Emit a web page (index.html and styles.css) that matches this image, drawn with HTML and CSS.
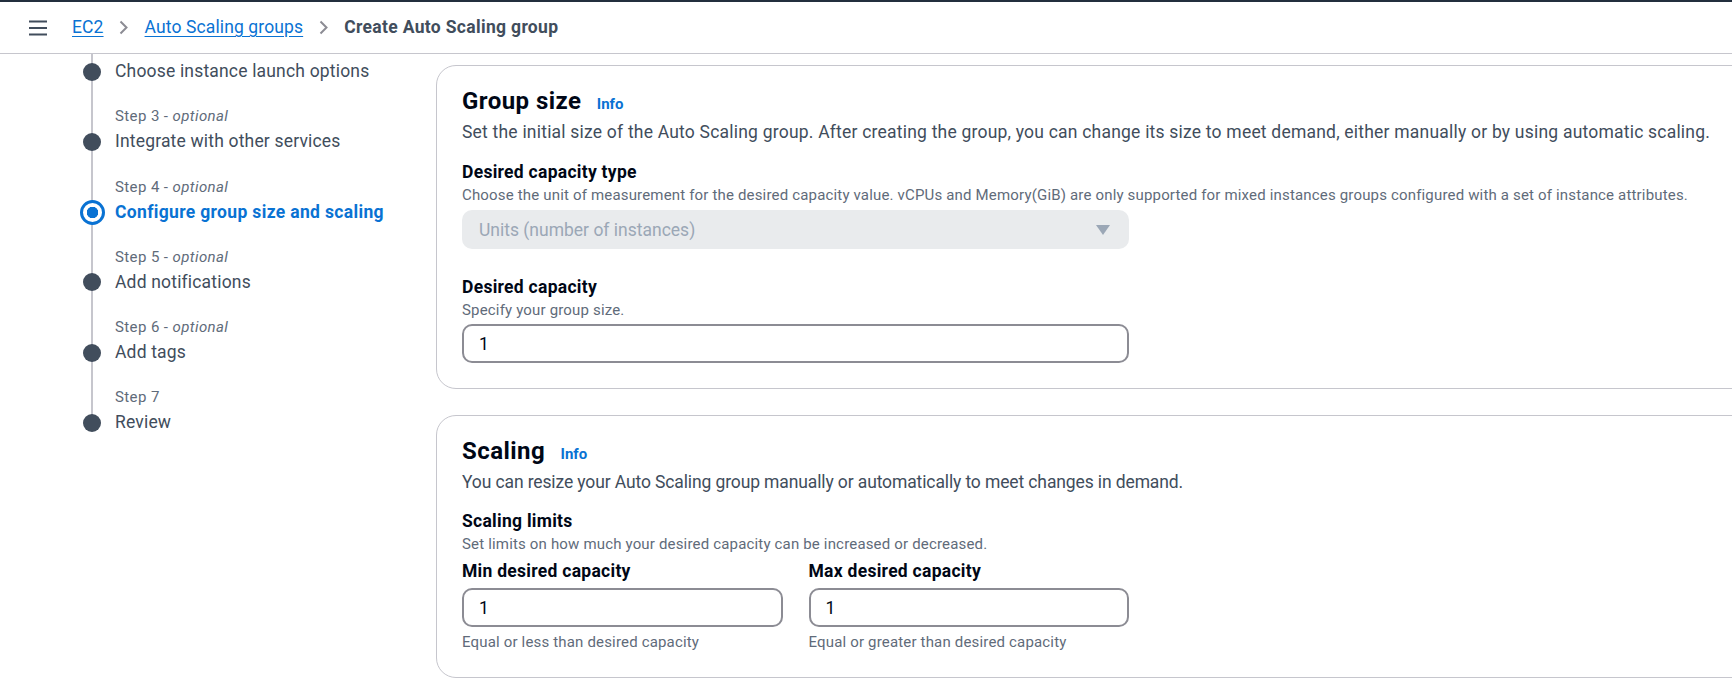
FILE: index.html
```html
<!DOCTYPE html>
<html lang="en">
<head>
<meta charset="utf-8">
<title>Create Auto Scaling group</title>
<link rel="stylesheet" href="styles.css">
</head>
<body>
<header class="topbar">
  <button class="menu" aria-label="Open navigation">
    <svg width="18" height="16" viewBox="0 0 18 16"><path d="M0 1.5h18M0 8h18M0 14.5h18" stroke="#414d5c" stroke-width="2.2" fill="none"/></svg>
  </button>
  <nav class="crumbs">
    <a class="crumb-link" href="#">EC2</a>
    <span class="sep"><svg width="10" height="15" viewBox="0 0 10 15"><path d="M1.5 1.5l6 6-6 6" stroke="#8c8c94" stroke-width="2" fill="none"/></svg></span>
    <a class="crumb-link" href="#">Auto Scaling groups</a>
    <span class="sep"><svg width="10" height="15" viewBox="0 0 10 15"><path d="M1.5 1.5l6 6-6 6" stroke="#8c8c94" stroke-width="2" fill="none"/></svg></span>
    <span class="crumb-current">Create Auto Scaling group</span>
  </nav>
</header>
<div class="layout">
  <aside class="steps">
    <ol class="step-list">
      <li class="step step-first">
        <span class="dot"></span>
        <span class="step-title">Choose instance launch options</span>
      </li>
      <li class="step">
        <span class="step-label">Step 3 - <i>optional</i></span>
        <span class="dot"></span>
        <span class="step-title">Integrate with other services</span>
      </li>
      <li class="step">
        <span class="step-label">Step 4 - <i>optional</i></span>
        <span class="dot dot-active"></span>
        <span class="step-title step-title-active">Configure group size and scaling</span>
      </li>
      <li class="step">
        <span class="step-label">Step 5 - <i>optional</i></span>
        <span class="dot"></span>
        <span class="step-title">Add notifications</span>
      </li>
      <li class="step">
        <span class="step-label">Step 6 - <i>optional</i></span>
        <span class="dot"></span>
        <span class="step-title">Add tags</span>
      </li>
      <li class="step step-last">
        <span class="step-label">Step 7</span>
        <span class="dot"></span>
        <span class="step-title">Review</span>
      </li>
    </ol>
  </aside>
  <main class="content">
    <section class="card">
      <h2 class="card-title">Group size <a class="info" href="#">Info</a></h2>
      <p class="card-desc">Set the initial size of the Auto Scaling group. After creating the group, you can change its size to meet demand, either manually or by using automatic scaling.</p>
      <div class="field">
        <div class="field-label">Desired capacity type</div>
        <div class="field-help">Choose the unit of measurement for the desired capacity value. vCPUs and Memory(GiB) are only supported for mixed instances groups configured with a set of instance attributes.</div>
        <div class="select">
          <span>Units (number of instances)</span>
          <svg width="14" height="10" viewBox="0 0 14 10"><path d="M0 0h14L7 10z" fill="#9ba7b6"/></svg>
        </div>
      </div>
      <div class="field field-spaced">
        <div class="field-label">Desired capacity</div>
        <div class="field-help">Specify your group size.</div>
        <div class="input">1</div>
      </div>
    </section>
    <section class="card card-second">
      <h2 class="card-title">Scaling <a class="info" href="#">Info</a></h2>
      <p class="card-desc card-desc-tight">You can resize your Auto Scaling group manually or automatically to meet changes in demand.</p>
      <div class="field field-group">
        <div class="field-label">Scaling limits</div>
        <div class="field-help">Set limits on how much your desired capacity can be increased or decreased.</div>
        <div class="limits">
          <div class="limit">
            <div class="field-label">Min desired capacity</div>
            <div class="input">1</div>
            <div class="field-note">Equal or less than desired capacity</div>
          </div>
          <div class="limit">
            <div class="field-label">Max desired capacity</div>
            <div class="input">1</div>
            <div class="field-note">Equal or greater than desired capacity</div>
          </div>
        </div>
      </div>
    </section>
  </main>
</div>
</body>
</html>
```
FILE: styles.css
```css
* { box-sizing: border-box; }
html, body { margin: 0; padding: 0; }
body {
  font-family: Roboto, "Liberation Sans", sans-serif;
  color: #000716;
  background: #ffffff;
  width: 1732px;
  height: 678px;
  overflow: hidden;
}

/* top bar */
.topbar {
  height: 54px;
  border-top: 2px solid #232f3e;
  border-bottom: 1px solid #c6c6cd;
  display: flex;
  align-items: center;
  padding-left: 29px;
}
.menu {
  border: 0;
  background: none;
  padding: 0;
  width: 18px;
  height: 16px;
  display: flex;
  margin-right: 25px;
}
.crumbs {
  display: flex;
  align-items: center;
  font-size: 17.5px;
  line-height: 25px;
  letter-spacing: 0.12px;
}
.crumb-link {
  color: #0972d3;
  text-decoration: underline;
  text-underline-offset: 3px;
}
.sep {
  width: 41px;
  display: flex;
  justify-content: center;
}
.crumb-current {
  color: #414d5c;
  font-weight: 700;
  letter-spacing: 0.33px;
}

/* layout */
.layout {
  display: grid;
  grid-template-columns: 436px 1400px;
}

/* wizard steps */
.step-list {
  list-style: none;
  margin: 0;
  padding: 0 0 0 77px;
}
.step {
  display: grid;
  grid-template-columns: 30px 1fr;
  column-gap: 8px;
  row-gap: 3px;
  padding-top: 22.25px;
  background: linear-gradient(#c6c6cd, #c6c6cd) no-repeat 14px 0 / 2px 100%;
}
.step-first { padding-top: 5px; }
.step-last { background-size: 2px 57px; }
.step-label {
  grid-column: 2;
  font-size: 15px;
  line-height: 20px;
  color: #5f6b7a;
  letter-spacing: 0.4px;
}
.dot {
  grid-column: 1;
  justify-self: center;
  align-self: center;
  width: 18px;
  height: 18px;
  border-radius: 50%;
  background: #414d5c;
}
.dot-active {
  width: 25px;
  height: 25px;
  border: 3px solid #0972d3;
  background: radial-gradient(circle, #0972d3 0 5.5px, #ffffff 6px);
}
.step-title {
  grid-column: 2;
  font-size: 17.5px;
  line-height: 25px;
  color: #414d5c;
  letter-spacing: 0.18px;
}
.step-title-active {
  color: #0972d3;
  font-weight: 700;
  letter-spacing: 0.34px;
}

/* cards */
.card {
  margin-top: 11px;
  border: 1px solid #c6c6cd;
  border-radius: 20px;
  padding: 20px 25px 25px;
}
.card-second { margin-top: 26px; }
.card-title {
  margin: 0;
  font-size: 24px;
  line-height: 30px;
  font-weight: 700;
  letter-spacing: 0.45px;
}
.info {
  margin-left: 9px;
  font-size: 15px;
  font-weight: 700;
  color: #0972d3;
  text-decoration: none;
  letter-spacing: 0;
}
.card-desc {
  margin: 1px 0 0;
  font-size: 17.5px;
  line-height: 25px;
  color: #414d5c;
  letter-spacing: 0.21px;
}
.card-desc-tight { letter-spacing: -0.12px; }
.field { margin-top: 15px; width: 667px; }
.field-spaced { margin-top: 26px; }
.field-group { margin-top: 14px; width: 1300px; }
.field-label {
  font-size: 17.5px;
  line-height: 25px;
  font-weight: 700;
  color: #000716;
  letter-spacing: 0.28px;
}
.field-help {
  font-size: 15px;
  line-height: 20px;
  color: #5f6b7a;
  white-space: nowrap;
  letter-spacing: 0.17px;
}
.field-note {
  margin-top: 5px;
  font-size: 15px;
  line-height: 20px;
  color: #5f6b7a;
  letter-spacing: 0.17px;
}
.select {
  margin-top: 5px;
  height: 39px;
  border-radius: 10px;
  background: #e9ebed;
  display: flex;
  align-items: center;
  justify-content: space-between;
  padding: 0 19px 0 17px;
  font-size: 17.5px;
  color: #9ba7b6;
}
.input {
  margin-top: 4px;
  height: 39px;
  border: 2px solid #8c8c94;
  border-radius: 10px;
  display: flex;
  align-items: center;
  padding-left: 15px;
  font-size: 17.5px;
  color: #000716;
}
.limits {
  margin-top: 5px;
  width: 667px;
  display: grid;
  grid-template-columns: 1fr 1fr;
  column-gap: 26px;
}
```
